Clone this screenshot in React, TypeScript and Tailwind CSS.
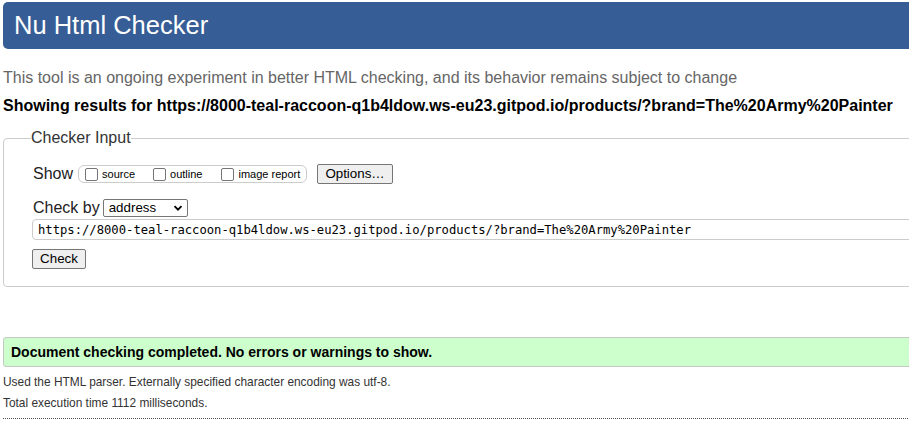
import React from "react";

function Checkbox({ label, className = "" }: { label: string; className?: string }) {
  return (
    <label className={`flex items-center ${className}`}>
      <input
        type="checkbox"
        className="m-0 h-[13px] w-[13px] appearance-none rounded-[2px] border border-[#767676] bg-white"
      />
      <span className="ml-[4px] text-[11px] leading-[13px] text-black">{label}</span>
    </label>
  );
}

export default function App() {
  const url =
    "https://8000-teal-raccoon-q1b4ldow.ws-eu23.gitpod.io/products/?brand=The%20Army%20Painter";
  return (
    <div className="h-[446px] w-[909px] overflow-hidden bg-white font-['Liberation_Sans',Arial,sans-serif] text-black">
      <div className="w-[1000px] pl-[3px]">
        <h1 className="mt-[2px] h-[47px] rounded-l-[5px] bg-[#365d95] pl-[11px] text-[25.5px] leading-[47px] font-normal text-white">
          Nu Html Checker
        </h1>
        <p className="mt-[20px] text-[16px] leading-[18px] text-[#666]">
          This tool is an ongoing experiment in better HTML checking, and its behavior remains subject to change
        </p>
        <p className="mt-[10px] text-[16px] leading-[18px] font-bold text-black">
          Showing results for {url}
        </p>

        <fieldset className="mt-[14px] rounded-[4px] border border-[#ccc] pb-[17px] pl-[29px] pt-[17px]">
          <legend className="ml-[-2px] text-[16px] leading-[18px] text-[#333]">Checker Input</legend>

          <div className="flex h-[20px] items-center">
            <span className="text-[16px] leading-[18px] text-[#222]">Show</span>
            <div className="ml-[5px] flex h-[18px] w-[229px] items-center rounded-[6px] border border-[#ccc] pl-[6px]">
              <Checkbox label="source" />
              <Checkbox label="outline" className="ml-[18px]" />
              <Checkbox label="image report" className="ml-[19px]" />
            </div>
            <button className="ml-[10px] h-[20px] w-[76px] rounded-[2px] border border-[#767676] bg-[#efefef] text-[13.33px] leading-[18px] text-black">
              Options…
            </button>
          </div>

          <div className="mt-[15px] flex h-[18px] items-center">
            <span className="text-[16px] leading-[18px] text-[#222]">Check by</span>
            <div className="ml-[3px] flex h-[18px] w-[85px] items-center justify-between rounded-[2px] border border-[#767676] bg-white pl-[5px] pr-[4px]">
              <span className="text-[13.33px] leading-[16px] text-black">address</span>
              <svg width="10" height="10" viewBox="0 0 10 10" aria-hidden="true">
                <path d="M1.5 3.2 L5 6.7 L8.5 3.2" fill="none" stroke="#000" strokeWidth="1.8" />
              </svg>
            </div>
          </div>

          <div className="ml-[-1px] mt-[2px] flex h-[21px] items-center rounded-l-[4px] border border-[#ccc] pl-[5px]">
            <span className="font-['DejaVu_Sans_Mono','Liberation_Mono',monospace] text-[12.2px] leading-[16px] text-black">
              {url}
            </span>
          </div>

          <button className="ml-[-1px] mt-[9px] block h-[20px] w-[54px] rounded-[2px] border border-[#767676] bg-[#efefef] text-[13.33px] leading-[18px] text-black">
            Check
          </button>
        </fieldset>

        <div className="mt-[50px] flex h-[30px] items-center rounded-l-[3px] border border-[#c4c8c4] bg-[#ccffcc] pl-[7px]">
          <span className="text-[14px] font-bold text-black">
            Document checking completed. No errors or warnings to show.
          </span>
        </div>
        <p className="mt-[8px] text-[11.9px] leading-[14px] text-[#333]">
          Used the HTML parser. Externally specified character encoding was utf-8.
        </p>
        <p className="mt-[7px] text-[11.9px] leading-[14px] text-[#333]">Total execution time 1112 milliseconds.</p>
        <div className="mt-[8px] border-t border-dotted border-[#555]" />
      </div>
    </div>
  );
}
